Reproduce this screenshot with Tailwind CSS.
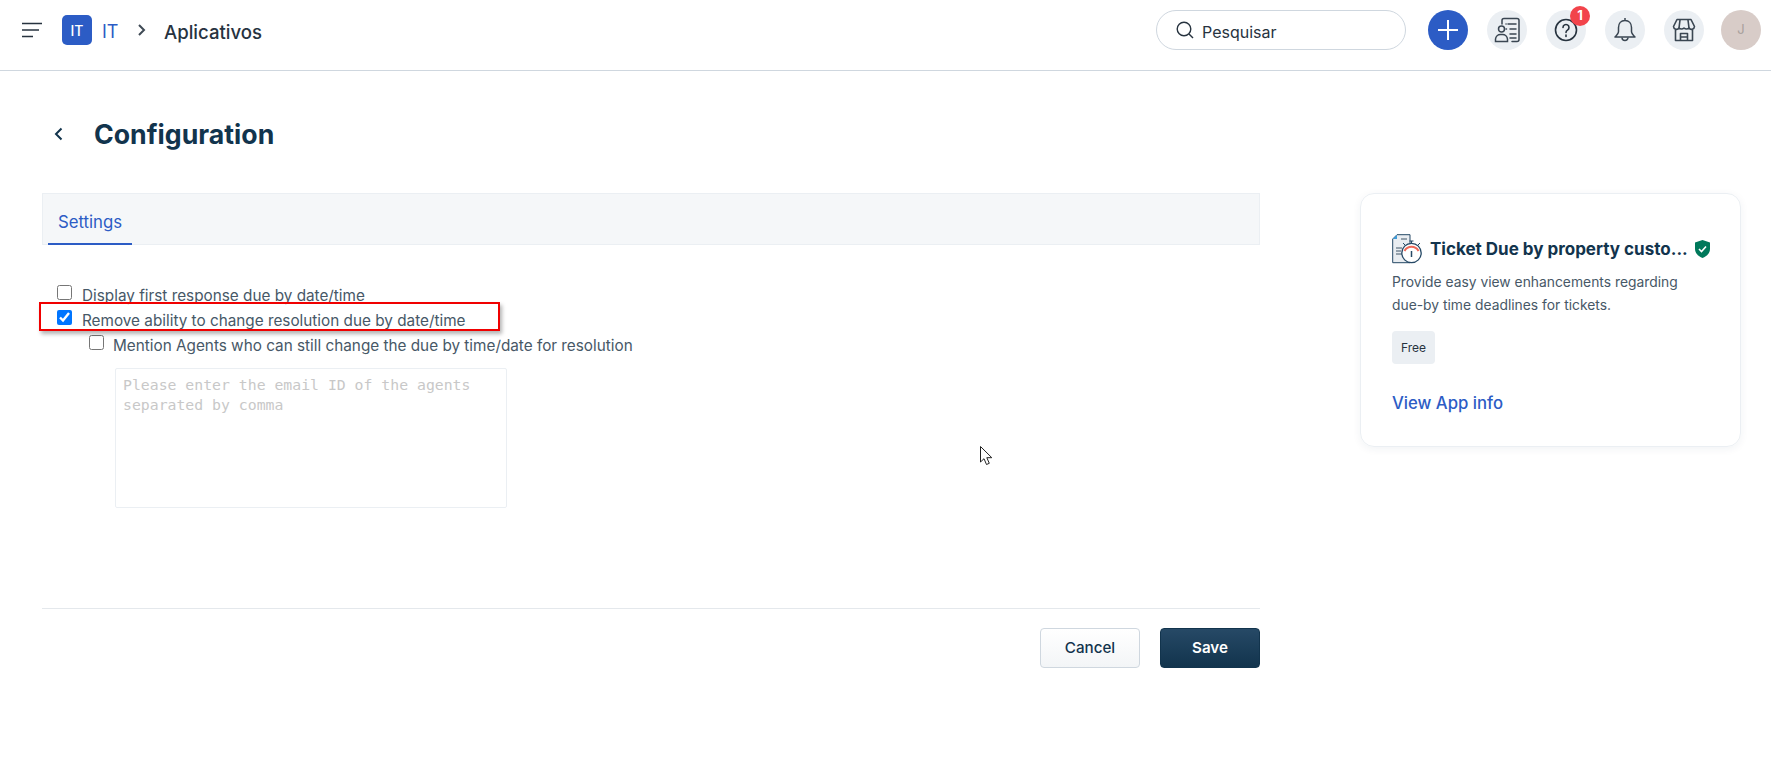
<!doctype html>
<html>
<head>
<meta charset="utf-8">
<script src="https://cdn.jsdelivr.net/npm/@tailwindcss/browser@4"></script>
</head>
<body class="bg-white font-['Inter',sans-serif] text-[#12344d] overflow-hidden h-[776px] relative">
<header class="h-[71px] border-b border-[#cfd7df] flex items-center pl-[22px] pr-[10px] pb-[10px]">
  <svg class="w-[20px] h-[16px] mr-[20px]" viewBox="0 0 20 16" fill="none" stroke="#27333f" stroke-width="1.6"><path d="M0 1.5h20M0 8h17M0 14.5h11"/></svg>
  <div class="w-[30px] h-[30px] rounded-[5px] bg-[#2c5cc5] text-white text-[14px] font-medium flex items-center justify-center">IT</div>
  <span class="ml-[10px] pt-[3px] text-[18px] text-[#2c5cc5] w-[36px]">IT</span>
  <svg class="w-[8px] h-[12px]" viewBox="0 0 8 12" fill="none" stroke="#3f4a55" stroke-width="2"><path d="M1 1l5 5-5 5"/></svg>
  <span class="ml-[18px] pt-[5px] text-[18.600px] font-medium text-[#27333f]">Aplicativos</span>
  <div class="ml-auto w-[250px] h-[40px] rounded-full border border-[#cfd7df] flex items-center pl-[19px] text-[16px] text-[#27333f]">
    <svg class="w-[18px] h-[18px] mr-[8px]" viewBox="0 0 18 18" fill="none" stroke="#27333f" stroke-width="1.4"><circle cx="8" cy="8" r="6.8"/><path d="M13 13l4 4"/></svg>
    <span class="pt-[3px]">Pesquisar</span>
  </div>
  <div class="ml-[22px] w-[40px] h-[40px] rounded-full bg-[#2c5cc5] flex items-center justify-center">
    <svg class="w-[20px] h-[20px]" viewBox="0 0 20 20" stroke="#fff" stroke-width="2"><path d="M10 0v20M0 10h20"/></svg>
  </div>
  <div class="ml-[19px] w-[40px] h-[40px] rounded-full bg-[#ebeff3] flex items-center justify-center">
    <svg class="w-[26px] h-[26px]" viewBox="0 0 26 26" fill="none" stroke="#3a4652" stroke-width="1.5" stroke-linecap="round"><path d="M8 7V3.5A2 2 0 0 1 10 1.500h13a2 2 0 0 1 2 2v19a2 2 0 0 1-2 2h-5"/><path d="M14 7h8M16 12h6M16 17h6M16 21h6M12 12h.5M12 7h.1"/><circle cx="7.500" cy="12" r="3"/><path d="M1.500 24.500v-2.500a5 5 0 0 1 5-4.500h2a5 5 0 0 1 5 4.500v2.500z"/></svg>
  </div>
  <div class="relative ml-[19px] w-[40px] h-[40px] rounded-full bg-[#ebeff3] flex items-center justify-center">
    <svg class="w-[24px] h-[24px]" viewBox="0 0 24 24" fill="none" stroke="#27333f" stroke-width="1.6"><circle cx="12" cy="12" r="10.500"/><path d="M9 9.500a3 3 0 1 1 4.500 2.600c-1 .6-1.500 1.200-1.500 2.400" stroke-linecap="round"/><path d="M12 17v1.500" stroke-linecap="round"/></svg>
    <span class="absolute top-[-4px] left-[24px] w-[20px] h-[20px] rounded-full bg-[#f2444b] text-white text-[13px] font-bold flex items-center justify-center">1</span>
  </div>
  <div class="ml-[19px] w-[40px] h-[40px] rounded-full bg-[#ebeff3] flex items-center justify-center">
    <svg class="w-[22px] h-[26px]" viewBox="0 0 22 26" fill="none" stroke="#3a4652" stroke-width="1.5" stroke-linejoin="round"><path d="M11 1v2.500M11 3.500c-4 0-6.500 3-6.500 7v4c0 2-1.500 3.500-3.500 5.500h20c-2-2-3.500-3.500-3.500-5.500v-4c0-4-2.500-7-6.500-7z"/><path d="M8 20.500a3 3 0 0 0 6 0"/></svg>
  </div>
  <div class="ml-[19px] w-[40px] h-[40px] rounded-full bg-[#ebeff3] flex items-center justify-center">
    <svg class="w-[24px] h-[24px]" viewBox="0 0 24 24" fill="none" stroke="#3a4652" stroke-width="1.6" stroke-linejoin="round"><path d="M5 1.500h14l3.500 7a3 3 0 0 1-5.500 1.500 3.500 3.500 0 0 1-5 0 3.500 3.500 0 0 1-5 0A3 3 0 0 1 1.500 8.500z"/><path d="M8 2L7 10M16 2l1 8"/><path d="M3.500 11.500v11h17v-11"/><path d="M8.500 22.500v-7h7v7M8.500 19h7"/></svg>
  </div>
  <div class="ml-[17px] w-[40px] h-[40px] rounded-full bg-[#d8ccc8] text-[#a8a09c] text-[13px] flex items-center justify-center">J</div>
</header>

<div class="h-[122px] flex items-center pl-[54px] pt-[4px]">
  <svg class="w-[9px] h-[14px] mr-[31px]" viewBox="0 0 9 14" fill="none" stroke="#12344d" stroke-width="2"><path d="M7.500 1.500L2 7l5.500 5.500"/></svg>
  <h1 class="text-[26.700px] font-bold leading-none text-[#12344d]">Configuration</h1>
</div>

<main class="flex pl-[42px]">
  <section class="w-[1218px]">
    <div class="h-[52px] bg-[#f5f7f9] border border-[#ebeff3] pl-[5px]">
      <div class="w-[84px] h-[51px] pt-[8px] border-b-2 border-[#2c5cc5] text-[#2c5cc5] text-[16.800px] flex items-center justify-center">Settings</div>
    </div>
    <div class="pt-[37px] text-[15.300px] text-[#475867] h-[363px]">
      <label class="flex items-center gap-[10px] h-[25px] pl-[15px]"><input type="checkbox" class="w-[15px] h-[15px] m-0 -translate-y-[2px]"><span class="pt-[4px]">Display first response due by date/time</span></label>
      <label class="flex items-center gap-[10px] h-[25px] pl-[15px]"><input type="checkbox" checked class="w-[15px] h-[15px] m-0 -translate-y-[2px]"><span class="pt-[4px]">Remove ability to change resolution due by date/time</span></label>
      <label class="flex items-center gap-[9px] h-[25px] pl-[47px]"><input type="checkbox" class="w-[15px] h-[15px] m-0 -translate-y-[2px]"><span class="pt-[4px]">Mention Agents who can still change the due by time/date for resolution</span></label>
      <textarea class="block mt-[11px] ml-[73px] w-[392px] h-[140px] border border-[#ebeff3] rounded-[2px] px-[7px] py-[6px] font-['DejaVu_Sans_Mono',monospace] text-[14.800px] leading-[20px] resize-none placeholder:text-[#c8c8c8]" placeholder="Please enter the email ID of the agents separated by comma"></textarea>
    </div>
    <div class="border-t border-[#e4e8ec] pt-[19px] flex justify-end gap-[20px]">
      <button class="w-[100px] h-[40px] pt-[1px] rounded-[4px] border border-[#cfd7df] bg-gradient-to-b from-white to-[#f3f5f7] text-[15.200px] font-medium text-[#12344d]">Cancel</button>
      <button class="w-[100px] h-[40px] pt-[1px] rounded-[4px] border border-[#12344d] bg-gradient-to-b from-[#264966] to-[#12344d] text-[15.200px] font-semibold text-white">Save</button>
    </div>
  </section>
  <aside class="ml-[100px] w-[381px] h-[254px] rounded-[14px] border border-[#ebeff3] shadow-[0_2px_8px_rgba(18,52,77,0.06)] pl-[31px] pr-[24px] pt-[39px]">
    <div class="flex items-center h-[32px]">
      <svg class="w-[30px] h-[30px] shrink-0" viewBox="0 0 30 30" fill="none">
        <path d="M5 .7h13v28H.7V5z" fill="#e9edf1" stroke="#264966"/>
        <path d="M5 .7V5H.7z" fill="#3f9bd8"/>
        <path d="M4 14h6M4 17h5M4 20h6M9 5h6" stroke="#3f5567"/>
        <circle cx="19.500" cy="19" r="9.700" fill="#fff" stroke="#264966" stroke-width="1.300"/>
        <path d="M12.500 17a8 8 0 0 1 14 0" stroke="#ef6a5a" stroke-width="2"/>
        <path d="M19.500 17v6" stroke="#264966" stroke-width="1.500"/>
        <path d="M17.500 7h4M19.500 7v2.500M11 9l2 2M28 9l-2 2" stroke="#264966"/>
      </svg>
      <span class="ml-[8px] pt-[2px] w-[257px] whitespace-nowrap text-[17px] font-bold text-[#12344d]">Ticket Due by property custo...</span>
      <svg class="ml-[8px] w-[15px] h-[18px] shrink-0" viewBox="0 0 15 18"><path d="M7.500 0L15 2.500V9c0 4.500-3.500 7.500-7.500 9C3.500 16.500 0 13.500 0 9V2.500z" fill="#00795b"/><path d="M4 9l2.500 2.500L11 6.500" fill="none" stroke="#fff" stroke-width="1.600"/></svg>
    </div>
    <p class="mt-[6px] w-[290px] text-[13.850px] leading-[23px] text-[#475867]">Provide easy view enhancements regarding due-by time deadlines for tickets.</p>
    <span class="mt-[14px] flex items-center justify-center w-[43px] h-[33px] rounded-[4px] bg-[#ebeff3] text-[12px] text-[#27333f]">Free</span>
    <a class="block mt-[27px] text-[16.700px] font-medium text-[#2c5cc5]">View App info</a>
  </aside>
</main>

<div class="absolute left-[39px] top-[302px] w-[461px] h-[29px] border-2 border-[#f00000] shadow-[2px_3px_4px_rgba(0,0,0,0.3)]"></div>
<svg class="absolute left-[980px] top-[446px] w-[13px] h-[20px]" viewBox="0 0 13 20" fill="#fff" stroke="#222"><path d="M.5.500v15.500l3.500-3.300 2.500 5.800 2.800-1.200-2.500-5.600h5z"/></svg>
</body>
</html>
